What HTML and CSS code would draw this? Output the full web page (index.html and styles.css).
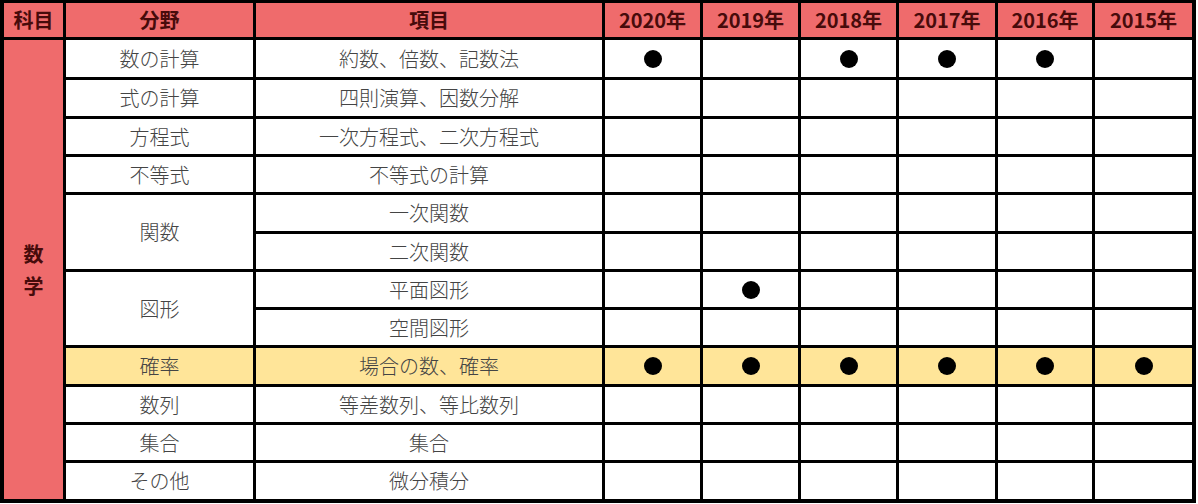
FILE: index.html
```html
<!DOCTYPE html>
<html lang="ja">
<head>
<meta charset="utf-8">
<title>出題分野表</title>
<link rel="stylesheet" href="styles.css">
</head>
<body>
<div class="sheet">
  <div class="c hd">科目</div>
  <div class="c hd">分野</div>
  <div class="c hd">項目</div>
  <div class="c hd">2020年</div>
  <div class="c hd">2019年</div>
  <div class="c hd">2018年</div>
  <div class="c hd">2017年</div>
  <div class="c hd">2016年</div>
  <div class="c hd">2015年</div>

  <div class="c subj">数<br>学</div>

  <div class="c">数の計算</div><div class="c">約数、倍数、記数法</div>
  <div class="c"><span class="dot"></span></div><div class="c"></div><div class="c"><span class="dot"></span></div><div class="c"><span class="dot"></span></div><div class="c"><span class="dot"></span></div><div class="c"></div>

  <div class="c">式の計算</div><div class="c">四則演算、因数分解</div>
  <div class="c"></div><div class="c"></div><div class="c"></div><div class="c"></div><div class="c"></div><div class="c"></div>

  <div class="c">方程式</div><div class="c">一次方程式、二次方程式</div>
  <div class="c"></div><div class="c"></div><div class="c"></div><div class="c"></div><div class="c"></div><div class="c"></div>

  <div class="c">不等式</div><div class="c">不等式の計算</div>
  <div class="c"></div><div class="c"></div><div class="c"></div><div class="c"></div><div class="c"></div><div class="c"></div>

  <div class="c span2">関数</div><div class="c">一次関数</div>
  <div class="c"></div><div class="c"></div><div class="c"></div><div class="c"></div><div class="c"></div><div class="c"></div>
  <div class="c">二次関数</div>
  <div class="c"></div><div class="c"></div><div class="c"></div><div class="c"></div><div class="c"></div><div class="c"></div>

  <div class="c span2">図形</div><div class="c">平面図形</div>
  <div class="c"></div><div class="c"><span class="dot"></span></div><div class="c"></div><div class="c"></div><div class="c"></div><div class="c"></div>
  <div class="c">空間図形</div>
  <div class="c"></div><div class="c"></div><div class="c"></div><div class="c"></div><div class="c"></div><div class="c"></div>

  <div class="c hl">確率</div><div class="c hl">場合の数、確率</div>
  <div class="c hl"><span class="dot"></span></div><div class="c hl"><span class="dot"></span></div><div class="c hl"><span class="dot"></span></div><div class="c hl"><span class="dot"></span></div><div class="c hl"><span class="dot"></span></div><div class="c hl"><span class="dot"></span></div>

  <div class="c">数列</div><div class="c">等差数列、等比数列</div>
  <div class="c"></div><div class="c"></div><div class="c"></div><div class="c"></div><div class="c"></div><div class="c"></div>

  <div class="c">集合</div><div class="c">集合</div>
  <div class="c"></div><div class="c"></div><div class="c"></div><div class="c"></div><div class="c"></div><div class="c"></div>

  <div class="c">その他</div><div class="c">微分積分</div>
  <div class="c"></div><div class="c"></div><div class="c"></div><div class="c"></div><div class="c"></div><div class="c"></div>
</div>
</body>
</html>
```
FILE: styles.css
```css
html, body {
  margin: 0;
  padding: 0;
  background: #ffffff;
}

.sheet {
  display: grid;
  width: 1188px;
  background: #000000;
  padding: 3px 4px 4px 4px;
  column-gap: 3px;
  row-gap: 3px;
  grid-template-columns: 59px 187px 346px 95px 95px 95px 96px 94px 97px;
  grid-template-rows: 34px 37px 36px 35px 35px 36px 35px 35px 35px 36px 35px 35px 36px;
  font-family: "Noto Sans CJK JP", "Noto Sans", sans-serif;
  font-size: 20px;
  font-weight: 300;
  color: #444444;
}

.c {
  background: #ffffff;
  display: flex;
  align-items: center;
  justify-content: center;
  line-height: 1;
  white-space: nowrap;
}

.hd {
  background: #ef6b6c;
  color: #470b0b;
  font-weight: 700;
  font-size: 20px;
}

.subj {
  grid-row: span 12;
  background: #ef6b6c;
  color: #470b0b;
  font-weight: 700;
  line-height: 32px;
  text-align: center;
}

.span2 {
  grid-row: span 2;
}

.hl {
  background: #ffe599;
}

.dot {
  display: block;
  width: 18px;
  height: 18px;
  border-radius: 50%;
  background: #000000;
}
```
